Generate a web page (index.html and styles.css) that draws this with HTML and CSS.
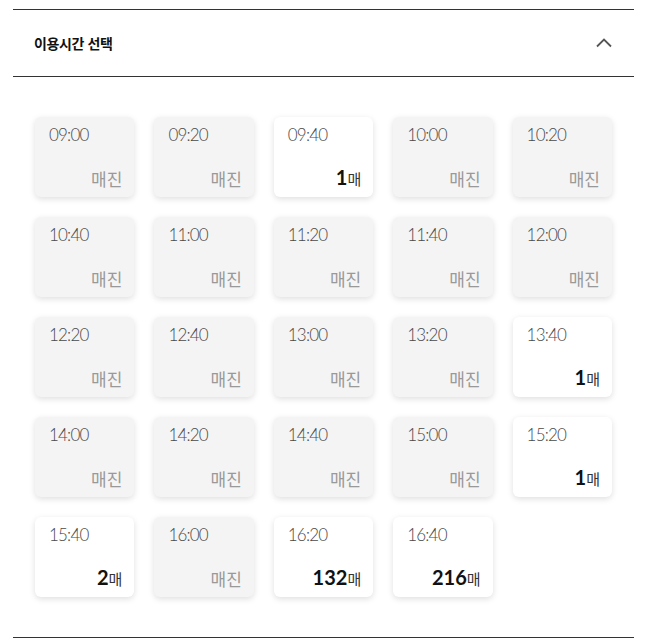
FILE: index.html
```html
<!DOCTYPE html>
<html lang="ko">
<head>
<meta charset="utf-8">
<title>이용시간 선택</title>
<link rel="stylesheet" href="styles.css">
</head>
<body>
<section class="panel">
  <div class="panel-head">
    <h2 class="panel-title">이용시간 선택</h2>
    <svg class="chev" width="16" height="10" viewBox="0 0 16 10" aria-hidden="true">
      <polyline points="1,8.5 8,1.5 15,8.5" fill="none" stroke="#555" stroke-width="1.8"/>
    </svg>
  </div>
  <div class="slots">
    <div class="slot sold"><span class="time">09:00</span><span class="state">매진</span></div>
    <div class="slot sold"><span class="time">09:20</span><span class="state">매진</span></div>
    <div class="slot"><span class="time">09:40</span><span class="state"><b class="num">1</b><span class="unit">매</span></span></div>
    <div class="slot sold"><span class="time">10:00</span><span class="state">매진</span></div>
    <div class="slot sold"><span class="time">10:20</span><span class="state">매진</span></div>

    <div class="slot sold"><span class="time">10:40</span><span class="state">매진</span></div>
    <div class="slot sold"><span class="time">11:00</span><span class="state">매진</span></div>
    <div class="slot sold"><span class="time">11:20</span><span class="state">매진</span></div>
    <div class="slot sold"><span class="time">11:40</span><span class="state">매진</span></div>
    <div class="slot sold"><span class="time">12:00</span><span class="state">매진</span></div>

    <div class="slot sold"><span class="time">12:20</span><span class="state">매진</span></div>
    <div class="slot sold"><span class="time">12:40</span><span class="state">매진</span></div>
    <div class="slot sold"><span class="time">13:00</span><span class="state">매진</span></div>
    <div class="slot sold"><span class="time">13:20</span><span class="state">매진</span></div>
    <div class="slot"><span class="time">13:40</span><span class="state"><b class="num">1</b><span class="unit">매</span></span></div>

    <div class="slot sold"><span class="time">14:00</span><span class="state">매진</span></div>
    <div class="slot sold"><span class="time">14:20</span><span class="state">매진</span></div>
    <div class="slot sold"><span class="time">14:40</span><span class="state">매진</span></div>
    <div class="slot sold"><span class="time">15:00</span><span class="state">매진</span></div>
    <div class="slot"><span class="time">15:20</span><span class="state"><b class="num">1</b><span class="unit">매</span></span></div>

    <div class="slot"><span class="time">15:40</span><span class="state"><b class="num">2</b><span class="unit">매</span></span></div>
    <div class="slot sold"><span class="time">16:00</span><span class="state">매진</span></div>
    <div class="slot"><span class="time">16:20</span><span class="state"><b class="num">132</b><span class="unit">매</span></span></div>
    <div class="slot"><span class="time">16:40</span><span class="state"><b class="num">216</b><span class="unit">매</span></span></div>
  </div>
</section>
</body>
</html>
```

FILE: styles.css
```css
html, body {
  margin: 0;
  padding: 0;
  background: #fff;
}

body {
  font-family: "Noto Sans CJK KR", "Noto Sans", sans-serif;
  color: #111;
}

.panel {
  width: 621px;
  margin: 9px 0 0 13px;
  border-top: 1px solid #333;
  border-bottom: 1px solid #333;
}

.panel-head {
  height: 66px;
  border-bottom: 1px solid #333;
  display: flex;
  align-items: center;
  justify-content: space-between;
  padding: 0 22px 0 21px;
}

.panel-title {
  margin: 0;
  font-size: 14px;
  font-weight: 700;
  letter-spacing: -0.4px;
  color: #111;
}

.chev {
  display: block;
  margin-top: -1px;
}

.slots {
  display: grid;
  grid-template-columns: repeat(5, 1fr);
  column-gap: 20px;
  row-gap: 20px;
  padding: 40px 22px 40px 22px;
}

.slot {
  height: 80px;
  box-sizing: border-box;
  border-radius: 6px;
  background: #fff;
  box-shadow: 0 2px 6px rgba(0, 0, 0, 0.13);
  padding: 8px 12px 7px 14px;
  display: flex;
  flex-direction: column;
  justify-content: space-between;
}

.slot.sold {
  background: #f4f4f4;
}

.time {
  font-family: "Lato", "Liberation Sans", sans-serif;
  font-size: 17px;
  line-height: 20px;
  font-weight: 300;
  color: #4a4a4a;
  letter-spacing: -0.8px;
}

.state {
  align-self: flex-end;
  font-size: 17px;
  line-height: 22px;
  color: #999;
  display: flex;
  align-items: baseline;
}

.num {
  font-family: "Lato", "Liberation Sans", sans-serif;
  font-size: 20px;
  font-weight: 700;
  color: #111;
}

.unit {
  font-size: 15px;
  color: #333;
}
```
